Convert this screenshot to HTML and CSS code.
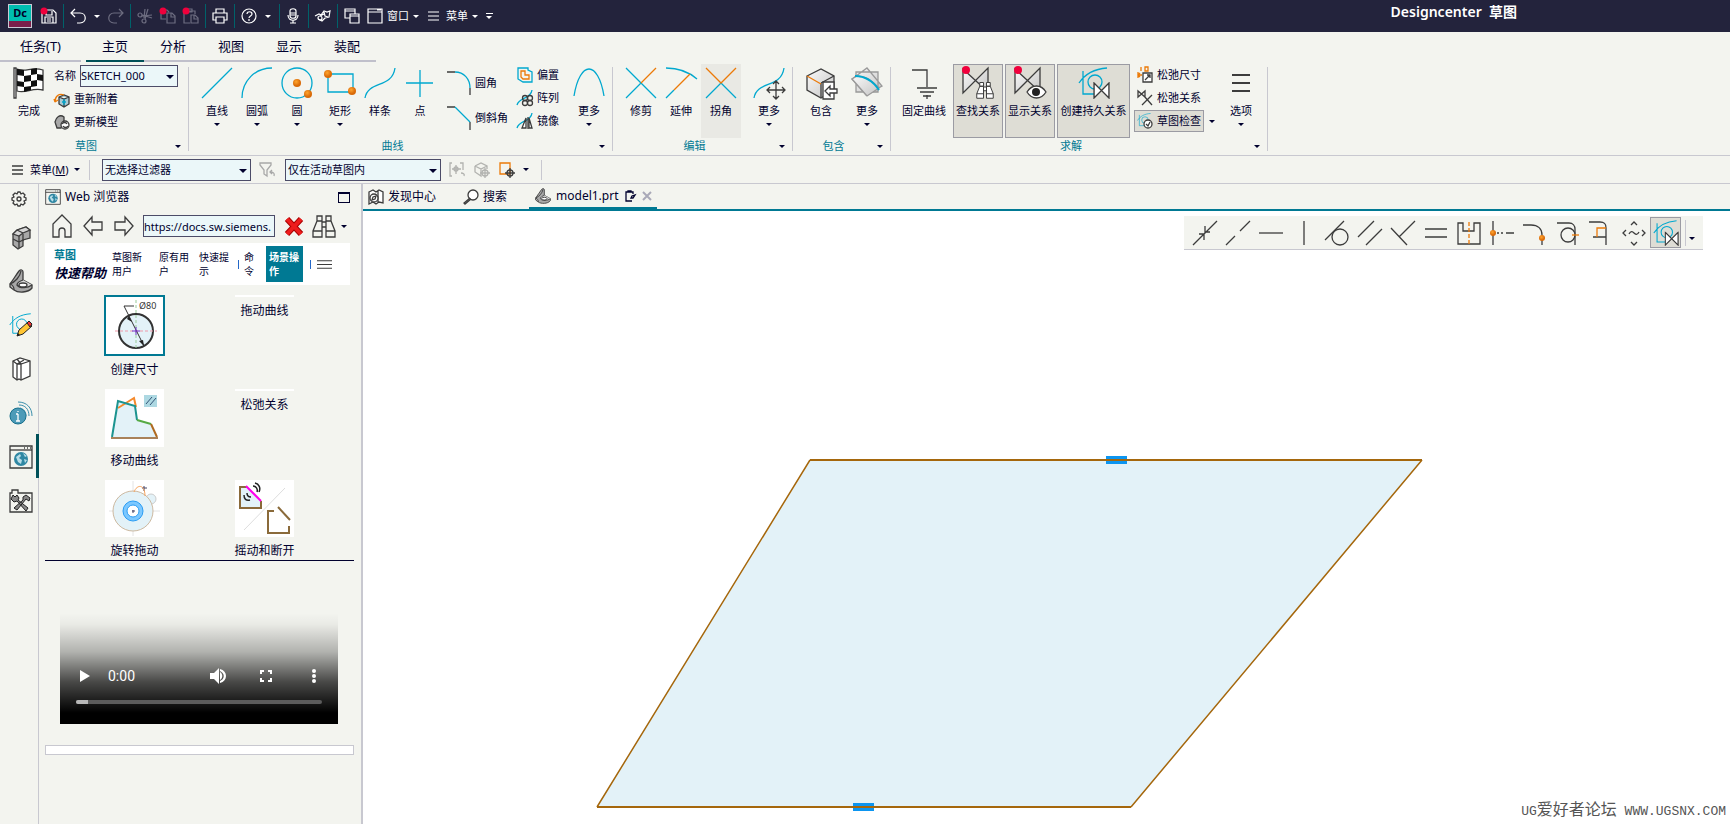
FILE: index.html
```html
<!DOCTYPE html>
<html lang="zh-CN">
<head>
<meta charset="utf-8">
<title>Designcenter 草图</title>
<link rel="stylesheet" href="styles.css">
</head>
<body>
<svg class="defs" aria-hidden="true">
  <defs>
    <linearGradient id="grey" x1="0" y1="0" x2="1" y2="1"><stop offset="0" stop-color="#fafafa"/><stop offset="1" stop-color="#c4c4c4"/></linearGradient>
    <radialGradient id="ball" cx=".4" cy=".35"><stop offset="0" stop-color="#ffa52e"/><stop offset="1" stop-color="#d96a08"/></radialGradient>
    <symbol id="sketch" viewBox="0 0 32 32"><path class="c" d="M1 16C7 7 15 2 29 1M5 4v23h13"/><circle class="c" cx="17" cy="15" r="7"/></symbol>
    <symbol id="bow" viewBox="0 0 16 16"><path class="k w" d="M1 1v14L15 1v14z"/></symbol>
    <symbol id="bino" viewBox="0 0 24 24"><path class="k w" d="M5 7L1 17v6h9V7zM14 7v16h9v-6L19 7zM5 2h5v5H5zM14 2h5v5h-5zM1 17h9M14 17h9M10 8h4v5h-4z"/></symbol>
    <symbol id="binoline" viewBox="0 0 24 24"><path class="k" d="M5 7L1 17v6h9V7zM14 7v16h9v-6L19 7zM5 2h5v5H5zM14 2h5v5h-5zM1 17h9M14 17h9M10 8h4v5h-4z"/></symbol>
    <symbol id="clip" viewBox="0 0 24 24"><path class="k steel" d="M1 15C4 11 7 6 10 2c2-2 4-1 4 1v8l9 5v3c-4 5-14 5-18 2l-4-3z"/><path class="k light" d="M1 15c3 1 4 4 4 6M14 11c-3 1-6 3-6 5 3 4 11 3 15 0"/><path class="k" d="M1 15C6 13 11 8 12 2"/><ellipse class="k w" cx="14" cy="16" rx="4" ry="2"/></symbol>
    <symbol id="cursor" viewBox="0 0 16 16"><circle class="k" cx="11" cy="11" r="3"/><path class="k" d="M11 6v10M6 11h10"/></symbol>
    <symbol id="globe" viewBox="0 0 24 24"><path class="k" d="M1 1h22v22H1z"/><path class="k" d="M1 5h22"/><path class="k" stroke-dasharray="1 2" d="M15 3h7"/><circle cx="12" cy="14" r="7" fill="#2f87a3"/><path fill="#b8dde8" d="M7 12l4-3 1 2-2 2 3 2-1 4-3-2zM14 8l4 3-2 1zM15 14l3 1-2 3z"/></symbol>
  </defs>
</svg>

<header class="titlebar">
  <span class="logo">Dc</span>
  <button class="tb save" aria-label="保存"><svg viewBox="0 0 16 16"><path d="M1 2h11l3 3v10H1zM4 15V9h8v6M5 3v4h6V3M6 11h4M6 13h4"/><circle class="dot" cx="3" cy="3" r="3.5"/></svg></button>
  <i class="tsep"></i>
  <button class="tb" aria-label="撤销"><svg viewBox="0 0 16 16"><path d="M5 1L1 5l4 4M1 5h9c7 0 7 10 0 10H7"/></svg></button>
  <button class="tcaret wide" aria-label="撤销列表"></button>
  <button class="tb dim" aria-label="重做"><svg viewBox="0 0 16 16"><path d="M11 1l4 4-4 4M15 5H6c-7 0-7 10 0 10h3"/></svg></button>
  <i class="tsep"></i>
  <div class="tset">
    <button class="tb dim" aria-label="剪切"><svg viewBox="0 0 16 16"><circle cx="3" cy="7" r="2"/><circle cx="7" cy="13" r="2"/><path d="M5 8l10-1M8 11L11 1M7 10L8 1M5 7l10 3"/></svg></button>
    <button class="tb dim" aria-label="复制"><svg viewBox="0 0 16 16"><path d="M6 11H1V2h6l2 2M7 15V5h5l3 3v7zM11 5v4h4"/><circle class="dot" cx="3" cy="3" r="3.5"/></svg></button>
    <button class="tb dim" aria-label="粘贴"><svg viewBox="0 0 16 16"><path d="M7 15H1V3h11v3M8 15V7h4l3 3v5zM11 7v4h4M5 1h4v3H5z"/><circle class="dot" cx="3" cy="3" r="3.5"/></svg></button>
  </div>
  <i class="tsep"></i>
  <button class="tb" aria-label="打印"><svg viewBox="0 0 16 16"><path d="M4 5V1h8v4M4 12H1V5h14v7h-3M4 9h8v6H4z"/></svg></button>
  <i class="tsep"></i>
  <button class="tb" aria-label="帮助"><svg viewBox="0 0 16 16"><circle cx="8" cy="8" r="7"/><path d="M6 6c0-3 5-3 5 0 0 2-3 2-3 4M8 11v2"/></svg></button>
  <button class="tcaret wide" aria-label="帮助列表"></button>
  <i class="tsep flush"></i>
  <button class="tb" aria-label="语音"><svg viewBox="0 0 16 16"><path d="M4 3c0-3 6-3 6 0v5c0 3-6 3-6 0zM2 7c0 7 10 7 10 0M7 12v3M4 15h6M4 5h6M4 7h6"/></svg></button>
  <i class="tsep"></i>
  <button class="tb" aria-label="触控"><svg viewBox="0 0 16 16"><path d="M0 8l4-2 2 1 3-4 3 1 3-1-1 6-4 1-3 3-4-2M9 4l1 4 3 1M5 8l4-2"/><circle cx="5" cy="10" r="2"/></svg></button>
  <i class="tsep"></i>
  <div class="tset">
    <button class="tb" aria-label="切换窗口"><svg viewBox="0 0 16 16"><path d="M6 10H1V1h10v5M1 3h10M6 6h9v9H6zM6 8h9"/></svg></button>
    <button class="tlabel"><svg viewBox="0 0 16 16"><path d="M1 1h14v14H1zM1 4h14M10 2h4"/></svg>窗口</button>
  </div>
  <button class="tcaret" aria-label="窗口列表"></button>
  <button class="tlabel lines"><svg viewBox="0 0 16 16"><path d="M2 4h11M2 8h11M2 12h11"/></svg>菜单</button>
  <button class="tcaret" aria-label="菜单列表"></button>
  <button class="tcaret bar" aria-label="自定义工具条"></button>
  <h1 class="apptitle">Designcenter&nbsp; 草图</h1>
</header>

<nav class="tabs">
  <button class="tab task">任务(T)</button>
  <button class="tab on">主页</button><button class="tab">分析</button><button class="tab">视图</button><button class="tab">显示</button><button class="tab">装配</button>
</nav>

<section class="ribbon">
  <div class="group g1">
    <div class="gbody">
      <button class="big"><svg viewBox="0 0 32 32"><path class="k w" d="M1 1h2v30H1z"/><path class="k w" d="M4 2c9 4 14-3 26 1v20c-11-3-17 4-26 1z"/><path fill="#111" d="M4 2l7 1v6l-7-1zM18 2l6-1v6l-6 1zM11 9l7-1v6l-7 1zM24 7l6 1v6l-6-1zM4 14l7 1v5l-7-1zM18 14l6-1v6l-6 1zM11 20l7-1v4l-7 2z"/></svg>完成</button>
      <div class="fields">
        <div class="namerow"><label for="nm">名称</label><span class="sel"><select id="nm"><option>SKETCH_000</option></select></span></div>
        <button class="small"><svg viewBox="0 0 16 16"><path class="k blue" d="M5 6l5-2 5 2v7l-5 3-5-3zM5 6l5 2 5-2M10 8v8"/><path class="c" d="M8 11h4M10 8v6"/><path class="o" d="M1 11c0-6 4-9 9-7M1 11l-1-3M1 11l3-2"/></svg>重新附着</button>
        <button class="small"><svg viewBox="0 0 16 16"><path class="k steel" d="M1 8C2 3 6 0 10 3v5l-3 6H3z"/><circle class="k w" cx="11" cy="11" r="4"/><path class="k" d="M8 10c1-2 4-2 5 0M14 12c-1 2-4 2-5 0"/></svg>更新模型</button>
      </div>
    </div>
    <div class="gfoot"><span>草图</span><button class="caret" aria-label="草图选项"></button></div>
  </div>

  <div class="group g2">
    <div class="gbody">
      <button class="big"><svg viewBox="0 0 32 32"><path class="c" d="M1 31L31 1"/></svg>直线<i class="caret"></i></button>
      <button class="big"><svg viewBox="0 0 32 32"><path class="c" d="M1 31C1 14 14 1 31 1"/></svg>圆弧<i class="caret"></i></button>
      <button class="big"><svg viewBox="0 0 32 32"><circle class="c" cx="16" cy="16" r="15"/><circle class="ball" cx="16" cy="16" r="4"/><circle class="ball" cx="27" cy="27" r="4"/></svg>圆<i class="caret"></i></button>
      <button class="big apart"><svg viewBox="0 0 32 32"><path class="c" d="M4 7h25v18H4z"/><circle class="ball" cx="4" cy="7" r="4"/><circle class="ball" cx="28" cy="24" r="4"/></svg>矩形<i class="caret"></i></button>
      <button class="big"><svg viewBox="0 0 32 32"><path class="c" d="M1 31C4 13 28 22 31 1"/></svg>样条</button>
      <button class="big"><svg viewBox="0 0 32 32"><path class="c" d="M2 16h27M16 3v27"/></svg>点</button>
      <div class="mids">
        <button class="mid"><svg viewBox="0 0 24 24"><path class="k" d="M0 1h8M23 17v7"/><path class="c" d="M8 1c9 0 15 7 15 16"/></svg>圆角</button>
        <button class="mid"><svg viewBox="0 0 24 24"><path class="k" d="M0 1h8M23 16v8"/><path class="c" d="M8 1l15 15"/></svg>倒斜角</button>
      </div>
      <div class="stack">
        <button class="small"><svg viewBox="0 0 16 16"><path class="c" d="M1 1h10v2l4 2v10H6l-5-3z"/><path class="o" d="M4 4h4v4h4v4H6L4 10z"/></svg>偏置</button>
        <button class="small"><svg viewBox="0 0 16 16"><path class="c" d="M0 15C2 7 14 9 15 0"/><circle class="k" cx="8" cy="8" r="2.5"/><circle class="k" cx="13" cy="8" r="2.5"/><circle class="k" cx="8" cy="13" r="2.5"/><circle class="k" cx="13" cy="13" r="2.5"/></svg>阵列</button>
        <button class="small"><svg viewBox="0 0 16 16"><path class="c" d="M0 15C2 7 14 9 15 0"/><path class="k w" d="M9 5v10H5zM12 5l3 10h-3z"/><path class="k" d="M11 4v12"/></svg>镜像</button>
      </div>
      <button class="big"><svg viewBox="0 0 32 32"><path class="c" d="M1 29C7-7 25-7 31 29"/></svg>更多<i class="caret"></i></button>
    </div>
    <div class="gfoot"><span>曲线</span><button class="caret" aria-label="曲线选项"></button></div>
  </div>

  <div class="group g3">
    <div class="gbody">
      <button class="big"><svg viewBox="0 0 32 32"><path class="c" d="M1 1l30 30M1 31l15-15"/><path class="o" d="M16 16L31 1"/></svg>修剪</button>
      <button class="big"><svg viewBox="0 0 32 32"><path class="c" d="M1 1c12 0 23 4 31 11M1 31l8-8"/><path class="o" d="M9 23L25 7"/></svg>延伸</button>
      <button class="big hover"><svg viewBox="0 0 32 32"><path class="c" d="M16 16l15 15M1 31l15-15"/><path class="o" d="M1 1l15 15L31 1"/></svg>拐角</button>
      <button class="big apart8"><svg viewBox="0 0 32 32"><path class="c" d="M1 31C4 13 28 22 31 1"/><path class="k" d="M23 14v18M14 23h18M20 17l3-3 3 3M20 29l3 3 3-3M17 20l-3 3 3 3M29 20l3 3-3 3"/></svg>更多<i class="caret"></i></button>
    </div>
    <div class="gfoot"><span>编辑</span><button class="caret" aria-label="编辑选项"></button></div>
  </div>

  <div class="group g4">
    <div class="gbody">
      <button class="big"><svg viewBox="0 0 32 32"><path class="k grey" d="M2 9l14-7 13 7v14l-13 8-14-8z"/><path class="k" d="M16 16l13-7M16 16v14"/><path class="o" d="M2 9l14 8"/><path class="k w" d="M18 15h11v17H18z"/><path class="k w" d="M20 24l5-5v3h7v4h-7v3z"/></svg>包含</button>
      <button class="big apart6"><svg viewBox="0 0 32 32"><path class="g grey" d="M5 5h22v20H5zM16 1l15 18-16 9L1 12z"/><path class="g grey" d="M1 12l5-3c8 0 13 3 22 12l-12 8z"/><path class="c thick" d="M4 9c10 0 18 5 24 14"/></svg>更多<i class="caret"></i></button>
    </div>
    <div class="gfoot"><span>包含</span><button class="caret" aria-label="包含选项"></button></div>
  </div>

  <div class="group g5">
    <div class="gbody">
      <button class="big w50"><svg viewBox="0 0 32 32"><path class="k" d="M4 3h15v17M9 21h20M12 25h14M15 29h8M19 28v4"/></svg>固定曲线</button>
      <div class="pressedset">
        <button class="big w50 pressed"><svg viewBox="0 0 32 32"><path class="k grey" d="M1 2v24L26 1v24z"/><svg x="14" y="14" width="18" height="18"><use href="#bino"/></svg><circle class="dot" cx="4" cy="3" r="4"/></svg>查找关系</button>
        <button class="big w50 pressed"><svg viewBox="0 0 32 32"><path class="k grey" d="M1 2v24L26 1v24z"/><path class="k w" d="M13 25c5-8 14-8 19 0-5 8-14 8-19 0z"/><circle cx="22" cy="25" r="4" fill="#222"/><circle class="dot" cx="4" cy="3" r="4"/></svg>显示关系</button>
        <button class="big w72 pressed"><svg viewBox="0 0 32 32"><use href="#sketch" width="32" height="32"/><svg x="15" y="15" width="17" height="17"><use href="#bow"/></svg></svg>创建持久关系</button>
      </div>
      <div class="stack solve">
        <button class="small"><svg viewBox="0 0 16 16"><path class="o" d="M1 5v6M1 8h4M3 6L1 8l2 2M4 0v4M8 0h3v4H8z"/><path class="k w" d="M6 6h9v9H6z"/><path class="k" d="M8 13l5-5M10 8h3v3"/></svg>松弛尺寸</button>
        <button class="small"><svg viewBox="0 0 16 16"><path class="k" d="M1 1v6l7-6v6zM5 15L15 5M7 6l8 9"/></svg>松弛关系</button>
        <div class="checkrow"><button class="small pressed"><svg viewBox="0 0 16 16"><use href="#sketch" width="15" height="15"/><circle class="k w" cx="11" cy="11" r="4"/><path class="k" d="M9 11l2 2 2-4"/></svg>草图检查</button><button class="caret" aria-label="草图检查列表"></button></div>
      </div>
      <button class="big"><svg viewBox="0 0 32 32"><path class="k thick" d="M7 8h18M7 16h18M7 24h18"/></svg>选项<i class="caret"></i></button>
    </div>
    <div class="gfoot"><span>求解</span><button class="caret" aria-label="求解选项"></button></div>
  </div>
</section>

<section class="filterbar">
  <button class="menu"><svg viewBox="0 0 16 16"><path class="k" d="M2 4h11M2 8h11M2 12h11"/></svg>菜单(<u>M</u>)<i class="caret"></i></button>
  <i class="vsep"></i>
  <span class="sel f1"><select aria-label="选择过滤器"><option>无选择过滤器</option></select></span>
  <button class="fi" aria-label="重置过滤器"><svg viewBox="0 0 16 16"><path class="l" d="M1 1h11v2L8 8v6l-3-2V8L1 3zM15 14c1-3-1-4-4-4M13 8l-2 2 2 2"/></svg></button>
  <span class="sel f2"><select aria-label="选择范围"><option>仅在活动草图内</option></select></span>
  <div class="fis">
    <button class="fi faded" aria-label="捕捉点"><svg viewBox="0 0 16 16"><path class="k" d="M3 1H1v13h2M11 1h3v7M7 3v9M3 7h9M15 14c1-2-1-3-3-3"/><circle class="k" cx="7" cy="7" r="2"/></svg></button>
    <button class="fi faded" aria-label="选择体"><svg viewBox="0 0 16 16"><path class="k" d="M1 4l6-3 6 3v3M1 4l6 3 6-3M1 4v6l6 4V7"/><use href="#cursor" width="16" height="16"/></svg></button>
    <button class="fi" aria-label="选择区域"><svg viewBox="0 0 16 16"><path class="o" d="M1 1h10v11H1z"/><use href="#cursor" width="16" height="16"/></svg></button>
  </div>
  <button class="caret" aria-label="选择列表"></button>
  <i class="vsep"></i>
</section>

<main class="work">
  <nav class="rail">
    <button class="gear" aria-label="设置"><svg viewBox="0 0 16 16"><path class="k" d="M7 1h2l1 2 2-1 2 2-1 2 2 1v2l-2 1 1 2-2 2-2-1-1 2H7l-1-2-2 1-2-2 1-2-2-1V7l2-1-1-2 2-2 2 1z"/><circle class="k" cx="8" cy="8" r="2"/></svg></button>
    <button aria-label="装配导航器"><svg viewBox="0 0 24 24"><path class="k steel" d="M4 9l4-4 9-3 4 3v8l-7 2v6l-5 3-5-4z"/><path class="k light" d="M4 9l4-4 9-3 4 3-7 3-4 3z"/><path class="k" d="M10 11v12M4 14l6 3 4-2M14 9v7M8 5l6 3"/></svg></button>
    <button aria-label="部件导航器"><svg viewBox="0 0 24 24"><use href="#clip"/></svg></button>
    <button aria-label="草图"><svg viewBox="0 0 24 24"><use href="#sketch" width="24" height="24"/><path fill="#ffc533" stroke="#222" d="M8 23l2-6L19 9l4 4-9 8z"/><path fill="#e33" stroke="#222" d="M18 10l2-2 3 3-2 3z"/><path fill="#222" d="M8 23l1-3 2 2z"/></svg></button>
    <button aria-label="重用库"><svg viewBox="0 0 24 24"><path class="k w" d="M4 4l7-3 10 3v15l-9 4-2-1-2 1-4-3z"/><path class="k" d="M8 7v16M12 7v16M4 4l4 3 7-4M8 2l4 5 9-3M12 7L8 7"/></svg></button>
    <button aria-label="信息"><svg viewBox="0 0 24 24"><circle cx="9" cy="15" r="8" fill="#4c9bb8" stroke="#176f8c"/><path d="M9 13v7M9 10v1M7 13h2M7 20h4" stroke="#fff" stroke-width="1.3"/><path fill="none" stroke="#3b8fac" d="M10 4c6 0 10 4 10 11M9 1c9 0 14 6 14 14M11 7c4 1 6 4 6 8"/></svg></button>
    <button class="on" aria-label="Web 浏览器"><svg viewBox="0 0 24 24"><use href="#globe"/></svg></button>
    <button aria-label="工具"><svg viewBox="0 0 24 24"><path class="k" d="M1 4h2V1h6v3h14v19H1z"/><path fill="#888" stroke="#222" d="M4 6l2 2 2-2 2 3-1 2 10 8-2 3-9-10-3 1-3-3zM14 8l3-2 4 3-1 3-3-2L8 21l-3-2 9-8z"/></svg></button>
  </nav>

  <aside class="panel">
    <div class="phead"><svg viewBox="0 0 24 24"><use href="#globe"/></svg><h2>Web 浏览器</h2><button class="max" aria-label="最大化"></button></div>
    <div class="pbar">
      <button aria-label="主页"><svg viewBox="0 0 20 24"><path class="k" d="M1 10v13h6v-6c0-4 6-4 6 0v6h6V10L10 1z"/></svg></button>
      <button aria-label="后退"><svg viewBox="0 0 20 24"><path class="k" d="M1 12L9 3v5h10v8H9v5z"/></svg></button>
      <button aria-label="前进"><svg viewBox="0 0 20 24"><path class="k" d="M19 12l-8-9v5H1v8h10v5z"/></svg></button>
      <input type="text" aria-label="地址" value="https://docs.sw.siemens.">
      <button aria-label="停止"><svg viewBox="0 0 20 24"><path stroke="#a00" stroke-width="6" d="M3 5l14 15M17 5L3 20"/><path stroke="#ee1c1c" stroke-width="4" d="M3 5l14 15M17 5L3 20"/></svg></button>
      <button class="bin" aria-label="查找"><svg viewBox="0 0 24 24"><use href="#binoline"/></svg></button>
      <button class="caret" aria-label="查找列表"></button>
    </div>
    <div class="help">
      <div class="brand"><b>草图</b><em>快速帮助</em></div>
      <a class="a1" href="#new">草图新用户</a><a class="a2" href="#old">原有用户</a><a class="a3" href="#tips">快速提示</a><i></i><a class="a4" href="#cmd">命令</a><a class="a5" href="#scene">场景操作</a><i></i>
      <button aria-label="目录"><svg viewBox="0 0 16 16"><path class="k" d="M0 4h16M0 8h16M0 12h16"/></svg></button>
    </div>
    <div class="cards">
      <a class="card" href="#dim"><span class="thumb sel1"><svg viewBox="0 0 57 57"><circle cx="30" cy="34" r="17" fill="#e3f2f8" stroke="#333" stroke-width="2"/><path fill="none" stroke="#9c9" stroke-dasharray="3 2" d="M30 3v50"/><path stroke="#e9a" stroke-dasharray="3 2" d="M9 34h42"/><path fill="none" stroke="#333" d="M28 9H18l20 40"/><path fill="#222" d="M23 19l3 6-5-3zM38 49l-5-5 4-1z"/><path stroke="#73c" d="M26 34h8M30 30v8"/><text x="33" y="12">Ø80</text></svg></span>创建尺寸</a>
      <a class="card" href="#drag"><span class="strip"></span>拖动曲线</a>
      <a class="card" href="#move"><span class="thumb"><svg viewBox="0 0 59 58"><path fill="#e3f2f8" d="M7 48l7-36 16 4 2 14 15 5 5 13z"/><path fill="none" stroke="#f58a2c" stroke-width="2" d="M13 19L29 9l2 9"/><path fill="none" stroke="#1c9490" stroke-width="2" d="M7 48l6-36 17 5 2 14"/><path fill="none" stroke="#5a4" stroke-width="2" d="M32 31l14 4"/><path fill="none" stroke="#b06a20" stroke-width="2" d="M46 35l6 13"/><path stroke="#a9825a" stroke-width="2" d="M6 49h47"/><path fill="#add8e2" d="M39 6h13v12H39z"/><path stroke="#357" d="M41 15l6-7M45 16l6-7"/></svg></span>移动曲线</a>
      <a class="card" href="#relax"><span class="strip"></span>松弛关系</a>
      <a class="card" href="#rot"><span class="thumb short"><svg viewBox="0 0 59 57"><path stroke="#e4e4e4" d="M28 1v55M4 31h51"/><circle cx="46" cy="19" r="5" fill="#e3f2f8" stroke="#ccc"/><circle cx="28" cy="31" r="20" fill="#e3f2f8" stroke="#cdb9a0"/><circle cx="28" cy="31" r="8" fill="#fff" stroke="#7cc8ff" stroke-width="4"/><circle cx="28" cy="31" r="10" fill="none" stroke="#2b9df4"/><circle cx="28" cy="31" r="6" fill="none" stroke="#2b9df4"/><path stroke="#446" d="M27 31h3M28 30v3M37 8h5M39 6v5"/><path fill="none" stroke="#f7a35c" d="M29 12c3-8 11-8 11 4"/></svg></span>旋转拖动</a>
      <a class="card" href="#shake"><span class="thumb short"><svg viewBox="0 0 59 57"><path stroke="#ddd" d="M9 50L50 8"/><path fill="#e3f2f8" stroke="#8a6a3a" stroke-width="2" d="M12 7H5v21h21v-7"/><path stroke="#f0e" stroke-width="2" d="M11 6l15 15"/><path fill="none" stroke="#222" stroke-width="1.5" d="M18 6c3 0 5 3 4 6M20 3c4 1 6 5 4 9M9 15c0 4 2 6 6 5M12 13c0 3 2 4 4 4"/><path fill="none" stroke="#8a6a3a" stroke-width="2" d="M39 31h-6v22h21v-7M43 27l12 13"/></svg></span>摇动和断开</a>
    </div>
    <div class="player">
      <div class="pc">
        <button class="play" aria-label="播放"><svg viewBox="0 0 16 16"><path d="M4 2l10 6-10 6z"/></svg></button>
        <time>0:00</time>
        <button aria-label="静音"><svg viewBox="0 0 16 16"><path d="M0 5h4l5-5v16l-5-5H0zM10 4c3 2 3 6 0 8zM10 1c8 2 8 12 0 14v-2c5-2 5-8 0-10z"/></svg></button>
        <button aria-label="全屏"><svg viewBox="0 0 16 16"><path d="M2 2h4v2H4v2H2zM10 2h4v4h-2V4h-2zM2 10h2v2h2v2H2zM12 10h2v4h-4v-2h2z"/></svg></button>
        <button aria-label="更多"><svg viewBox="0 0 16 16"><circle cx="8" cy="3" r="2"/><circle cx="8" cy="8" r="2"/><circle cx="8" cy="13" r="2"/></svg></button>
      </div>
      <progress value="5" max="100" aria-label="进度"></progress>
    </div>
    <div class="blank"></div>
  </aside>

  <section class="view">
    <div class="docs">
      <button class="doc"><svg viewBox="0 0 16 16"><path class="k w" d="M1 3l4-2 3 2 3-2 4 2v11l-4-1-3 2-3-2-4 2zM10 2v12"/><circle class="k w" cx="6" cy="9" r="4"/><path class="k" d="M4 11l1-3 3-1-1 3z"/></svg>发现中心</button>
      <button class="doc"><svg viewBox="0 0 16 16"><circle class="k w" cx="10" cy="6" r="5"/><path class="k" d="M7 9l-6 5 1 1 6-5"/></svg>搜索</button>
      <button class="doc on"><svg viewBox="0 0 24 24"><use href="#clip"/></svg>model1.prt<svg class="edit" viewBox="0 0 12 12"><path d="M8 11H2V2h7v2M4 2V1h3v1M7 8l1-2 3-1-2 3z"/></svg><svg class="close" viewBox="0 0 12 12"><path d="M2 2l8 8M10 2l-8 8"/></svg></button>
    </div>
    <div class="canvas">
      <svg class="draw">
        <path fill="#e3f2f8" d="M448 249H1059L768 596H234z"/>
        <path fill="#0c95f0" d="M743 245h21v8h-21zM490 592h21v8h-21z"/>
        <path fill="none" stroke="#a5670c" stroke-width="2" d="M447 249H1059M768 596H234"/>
        <path fill="none" stroke="#a5670c" stroke-width="1.5" d="M447 249L234 596M1059 249L768 596"/>
      </svg>
      <div class="rel">
        <button aria-label="重合"><svg viewBox="0 0 26 26"><path class="k" d="M1 25L25 1M7 14h5v6M18 12h-5V6"/></svg></button>
        <button aria-label="共线"><svg viewBox="0 0 26 26"><path class="k" d="M1 25l9-9M15 11l10-10"/></svg></button>
        <button aria-label="水平"><svg viewBox="0 0 26 26"><path class="k" d="M1 13h24"/></svg></button>
        <button aria-label="竖直"><svg viewBox="0 0 26 26"><path class="k" d="M13 1v24"/></svg></button>
        <button aria-label="相切"><svg viewBox="0 0 26 26"><path class="k" d="M1 20L20 1"/><circle class="k" cx="16" cy="17" r="8"/></svg></button>
        <button aria-label="平行"><svg viewBox="0 0 26 26"><path class="k" d="M1 17L17 1M9 25L25 9"/></svg></button>
        <button aria-label="垂直"><svg viewBox="0 0 26 26"><path class="k" d="M9 17L25 1M1 8l16 17"/></svg></button>
        <button aria-label="等长"><svg viewBox="0 0 26 26"><path class="k" d="M2 9h22M2 17h22"/></svg></button>
        <button aria-label="对称"><svg viewBox="0 0 26 26"><path class="k" d="M2 3h5v8h11V3h6v21H2z"/><path class="o" stroke-dasharray="4 2" d="M13 2v23"/></svg></button>
        <button aria-label="对齐"><svg viewBox="0 0 26 26"><path class="k" d="M4 1v24M17 13h8"/><path class="k" stroke-dasharray="2 2" d="M8 13h8"/><circle class="ball" cx="4" cy="13" r="3"/></svg></button>
        <button aria-label="点在曲线上"><svg viewBox="0 0 26 26"><path class="k" d="M1 5h8c7 0 11 4 11 10v10"/><circle class="ball" cx="20" cy="18" r="3"/></svg></button>
        <button aria-label="中点"><svg viewBox="0 0 26 26"><path class="k" d="M2 3h12c4 0 6 3 6 6v16"/><circle class="k" cx="13" cy="15" r="7"/><path class="o" d="M17 15h7"/></svg></button>
        <button aria-label="法向"><svg viewBox="0 0 26 26"><path class="k" d="M1 2h11c5 0 6 2 6 6v17M5 17h13"/><path class="o" d="M18 8H9v9"/></svg></button>
        <button aria-label="缩放"><svg viewBox="0 0 26 26"><path class="k" d="M10 5l3-3 3 3M10 22l3 3 3-3M5 10l-3 3 3 3M21 10l3 3-3 3M8 14c2-4 4-2 5-1s3 3 5-1"/></svg></button>
        <button class="pressed" aria-label="创建持久关系"><svg viewBox="0 0 32 32"><use href="#sketch" width="32" height="32"/><svg x="14" y="14" width="18" height="18"><use href="#bow"/></svg></svg></button>
        <i class="vsep"></i><button class="caret low" aria-label="关系列表"></button>
      </div>
      <p class="mark"><span>UG</span>爱好者论坛<span> WWW.UGSNX.COM</span></p>
    </div>
  </section>
</main>
</body>
</html>
```

FILE: styles.css
```css
:root {
  --bg: #f3f4ef;
  --ink: #00002e;
  --line: #c8c8d0;
  --teal: #007993;
  --field: #ebf7f9;
}
* { box-sizing: border-box; }
body {
  margin: 0;
  height: 100vh;
  display: flex;
  flex-direction: column;
  overflow: hidden;
  background: var(--bg);
  color: var(--ink);
  font: 11px/14px "Noto Sans", "Noto Sans CJK SC", sans-serif;
}
button, input, select { font: inherit; color: inherit; margin: 0; padding: 0; border: 0; background: none; border-radius: 0; }
button { display: flex; align-items: center; white-space: nowrap; flex: none; }
svg { display: block; flex: none; overflow: visible; }
.defs { position: absolute; width: 0; height: 0; }
a { color: inherit; text-decoration: none; }
h1, h2, p { margin: 0; }

.k, .c, .o, .l, .g { fill: none; stroke: #3c3c3c; stroke-width: 1.3; }
.c { stroke: #00a8cf; }
.o { stroke: #ec7a08; }
.l { stroke: #a8a8a8; }
.g { stroke: #999; }
.w { fill: #fff; }
.grey { fill: url(#grey); }
.steel { fill: #a8a8a8; }
.light { fill: #d6d6d6; }
.blue { fill: #a9c9d3; }
.thick { stroke-width: 2; }
.ball { fill: url(#ball); }
.dot { fill: #f0003c; stroke: none; }

.caret { display: flex; justify-content: center; align-items: center; width: 12px; height: 12px; }
.caret::before, .tcaret::before { content: ""; border: 3px solid transparent; border-top-color: var(--ink); border-bottom: 0; }

/* Title bar */
.titlebar { position: relative; height: 32px; flex: none; display: flex; align-items: center; padding-left: 8px; background: #23233c; color: #fff; }
.logo { width: 24px; height: 24px; margin-right: 9px; border: 1px solid #c9c9d4; background: linear-gradient(#00bdb0 16px, #7a1f4b 16px); color: #000028; font-weight: 700; line-height: 16px; text-align: center; }
.tb svg, .tlabel svg { width: 16px; height: 16px; fill: none; stroke: #fff; stroke-width: 1.2; }
.tb.dim svg { stroke: #6d6d80; }
.titlebar .dot { stroke: none; }
.tsep { width: 1px; height: 24px; margin: 0 6px; background: #00626a; }
.tsep.flush { margin-left: 0; }
.tset { display: flex; gap: 7px; }
.tlabel { gap: 4px; }
.tlabel.lines { margin-left: 3px; }
.tcaret { width: 14px; justify-content: center; }
.tcaret.wide { width: 22px; }
.tcaret::before { border-top-color: #fff; }
.tcaret.bar { flex-direction: column; gap: 2px; height: 7px; }
.tcaret.bar::before { order: 2; }
.tcaret.bar::after { content: ""; width: 7px; height: 1px; background: #fff; }
.apptitle { margin: 0 213px 8px auto; font-size: 14px; line-height: 18px; font-weight: 600; }

/* Ribbon tabs */
.tabs { display: flex; height: 30px; flex: none; font-size: 13px; }
.tab { width: 58px; justify-content: center; border-bottom: 2px solid #c0c0cb; }
.task { width: 81px; margin-right: 5px; }
.tab.on { border-color: #005159; }

/* Ribbon */
.ribbon { display: flex; flex: none; height: 94px; border-bottom: 1px solid var(--line); }
.group { position: relative; display: flex; flex-direction: column; padding-top: 2px; padding-right: 1px; }
.group::after { content: ""; position: absolute; right: 0; top: 5px; bottom: 4px; width: 1px; background: var(--line); }
.gbody { display: flex; height: 74px; align-items: flex-start; }
.gfoot { display: flex; align-items: center; height: 16px; color: var(--teal); }
.gfoot span { flex: 1; text-align: center; }
.gfoot .caret { width: 16px; padding-right: 4px; }
.g1 { width: 189px; }
.g2 { width: 424px; }
.g3 { width: 180px; }
.g4 { width: 98px; }
.g5 { width: 377px; }
.g1 .gbody { padding-left: 9px; }
.g2 .gbody, .g3 .gbody, .g4 .gbody, .g5 .gbody { padding-left: 8px; }
.big { width: 40px; height: 74px; padding-top: 3px; flex-direction: column; justify-content: flex-start; }
.big > svg { width: 32px; height: 32px; margin-bottom: 5px; }
.big .caret { height: 12px; }
.apart { margin-left: 3px; }
.apart6 { margin-left: 6px; }
.apart8 { margin-left: 8px; }
.hover { background: #e9e9e4; }
.pressed { background: #deddd5; border: 1px solid #9b9ba3; }
.big.pressed { padding-top: 2px; }
.w50 { width: 50px; }
.w72 { width: 73px; }
.pressedset { display: flex; gap: 2px; margin-left: 4px; }
.fields { display: flex; flex-direction: column; gap: 1px; margin-left: 5px; padding-top: 1px; }
.namerow { display: flex; align-items: center; gap: 4px; height: 22px; }
.sel { position: relative; display: block; height: 22px; }
.sel select { appearance: none; width: 100%; height: 22px; padding: 0 2px; border: 1px solid #4c4c68; background: var(--field); display: block; }
.sel::after { content: ""; position: absolute; right: 4px; top: 10px; border: 4px solid transparent; border-top-color: var(--ink); border-bottom: 0; pointer-events: none; }
.namerow .sel { width: 98px; }
.namerow select { padding: 0; }
.small { height: 22px; gap: 4px; }
.small svg { width: 16px; height: 16px; }
.mids { display: flex; flex-direction: column; gap: 11px; padding: 7px 0 0 7px; width: 77px; }
.mid { height: 24px; gap: 4px; }
.mid svg { width: 24px; height: 24px; }
.stack { display: flex; flex-direction: column; gap: 1px; width: 52px; }
.stack.solve { width: 84px; margin-left: 4px; }
.solve .small { padding-left: 3px; }
.solve .small.pressed { padding: 0 2px; }
.checkrow { display: flex; align-items: center; gap: 2px; }
.solve + .big { margin-left: 3px; }

/* Selection bar */
.filterbar { display: flex; align-items: center; height: 28px; flex: none; padding-left: 10px; border-bottom: 1px solid var(--line); }
.menu { gap: 0; width: 74px; font-size: 11px; }
.menu svg { width: 16px; height: 16px; margin-right: 4px; }
.menu .caret { margin-left: 2px; }
.vsep { width: 1px; height: 20px; background: var(--line); margin: 0 5px; }
.f1 { width: 149px; margin: 0 8px 0 7px; }
.f2 { width: 156px; margin: 0 8px 0 10px; }
.fi svg { width: 16px; height: 16px; }
.fis { display: flex; gap: 9px; margin-right: 5px; }
.faded { opacity: .35; }
.filterbar > .caret { margin-right: 4px; }

/* Work area */
.work { flex: 1; display: flex; min-height: 0; }
.rail { width: 39px; flex: none; border-right: 1px solid var(--line); }
.rail button { position: relative; width: 38px; height: 44px; padding: 2px 0 0 3px; justify-content: center; }
.rail svg { width: 24px; height: 24px; }
.rail .gear { height: 30px; padding: 0; }
.rail .gear svg { width: 16px; height: 16px; }
.rail .on::after { content: ""; position: absolute; right: -1px; top: 0; width: 3px; height: 44px; background: #005159; }

.panel { width: 324px; flex: none; padding: 0 7px 0 6px; border-right: 2px solid var(--line); }
.phead { display: flex; align-items: center; height: 26px; gap: 4px; }
.phead svg { width: 16px; height: 16px; }
.phead h2 { flex: 1; font-size: 12px; font-weight: 400; }
.max { width: 12px; height: 11px; margin-right: 4px; border: 1px solid var(--ink); border-top-width: 2px; }
.pbar { display: flex; align-items: center; gap: 11px; height: 33px; padding: 0 0 1px 7px; }
.pbar svg { width: 20px; height: 24px; }
.pbar input { width: 132px; height: 22px; margin: 0 -2px; border: 1px solid #4c4c68; background: var(--field); }
.pbar .bin { margin-left: -3px; }
.pbar .bin svg { width: 24px; }
.pbar > .caret { margin-left: -9px; }
.help { display: flex; align-items: center; width: 305px; height: 42px; padding-left: 9px; background: #fff; font-size: 10px; }
.help .brand { display: flex; flex-direction: column; width: 58px; gap: 3px; }
.brand b { color: var(--teal); font-size: 11px; }
.brand em { font-weight: 700; font-size: 13px; line-height: 16px; }
.help a { width: 30px; }
.help .a2 { margin-left: 17px; }
.help .a3 { margin-left: 10px; }
.help .a4 { width: 10px; margin-left: 5px; }
.help .a5 { width: 37px; height: 36px; margin: 0 6px 0 12px; padding: 4px 3px; background: var(--teal); color: #fff; font-weight: 700; }
.help i { width: 1px; height: 9px; margin-left: 1px; background: #2468c8; }
.help .a3 + i { margin-left: 9px; }
.help button { margin-left: 6px; }
.help button svg { width: 15px; height: 15px; }

.cards { display: grid; grid-template-columns: 131px 129px; grid-template-rows: 94px 91px 80px; justify-content: start; padding: 10px 0 0 24px; border-bottom: 1px solid var(--ink); font-size: 12px; line-height: 16px; }
.card { display: flex; flex-direction: column; align-items: center; gap: 6px; }
.thumb { width: 59px; height: 58px; background: #fff; }
.thumb svg { width: 59px; height: 58px; }
.thumb.short, .thumb.short svg { height: 57px; }
.sel1 { width: 61px; height: 61px; border: 2px solid var(--teal); }
.sel1 svg { width: 57px; height: 57px; }
.thumb text { font-size: 9px; fill: #333; }
.strip { width: 59px; height: 2px; background: #fff; }

.player { display: flex; flex-direction: column; justify-content: flex-end; height: 111px; margin: 52px 16px 0 15px; padding: 0 16px 20px; background: linear-gradient(rgba(0,0,0,0), rgba(0,0,0,.04) 10%, rgba(0,0,0,.27) 35%, rgba(0,0,0,.7) 62%, #000 90%); color: #fff; }
.pc { display: flex; align-items: center; height: 48px; gap: 32px; }
.pc svg { width: 16px; height: 16px; fill: #fff; }
.pc time { flex: 1; margin-left: -16px; font: 14px/16px Roboto, sans-serif; }
.player progress { appearance: none; display: block; width: 100%; height: 4px; border: 0; border-radius: 2px; overflow: hidden; background: #5c5c5c; }
.player progress::-webkit-progress-bar { background: #5c5c5c; }
.player progress::-webkit-progress-value { background: #b8b8b8; }
.blank { height: 10px; margin-top: 21px; border: 1px solid var(--line); background: #fff; }

/* Document view */
.view { flex: 1; min-width: 0; display: flex; flex-direction: column; }
.docs { display: flex; height: 27px; flex: none; border-bottom: 2px solid var(--teal); font-size: 12px; }
.doc { gap: 4px; padding-left: 5px; margin-right: 22px; }
.doc svg { width: 16px; height: 16px; }
.doc.on { gap: 5px; width: 128px; padding-left: 6px; margin-right: 0; border-bottom: 2px solid var(--teal); }
.doc .edit { width: 12px; height: 12px; fill: none; stroke: var(--ink); stroke-width: 1.3; }
.doc .close { width: 12px; height: 12px; stroke: #a9a9b8; stroke-width: 2; }
.canvas { position: relative; flex: 1; min-height: 0; background: #fff; overflow: hidden; }
.draw { position: absolute; inset: 0; width: 100%; height: 100%; }
.rel { position: absolute; top: 5px; right: 27px; display: flex; align-items: center; height: 34px; padding: 0 5px 0 4px; background: var(--bg); border-bottom: 1px solid var(--line); }
.rel button { width: 33px; height: 31px; justify-content: center; }
.rel button > svg { width: 26px; height: 26px; }
.rel .pressed { width: 31px; }
.rel .vsep { height: 26px; margin: 0 0 0 4px; }
.rel .caret.low { width: 12px; padding-top: 12px; }
.mark { position: absolute; right: 4px; bottom: 3px; font-family: "Noto Sans CJK SC", sans-serif; font-size: 16px; line-height: 18px; color: #555; white-space: pre; }
.mark span { font-family: "Liberation Mono", monospace; font-size: 13px; }
```
